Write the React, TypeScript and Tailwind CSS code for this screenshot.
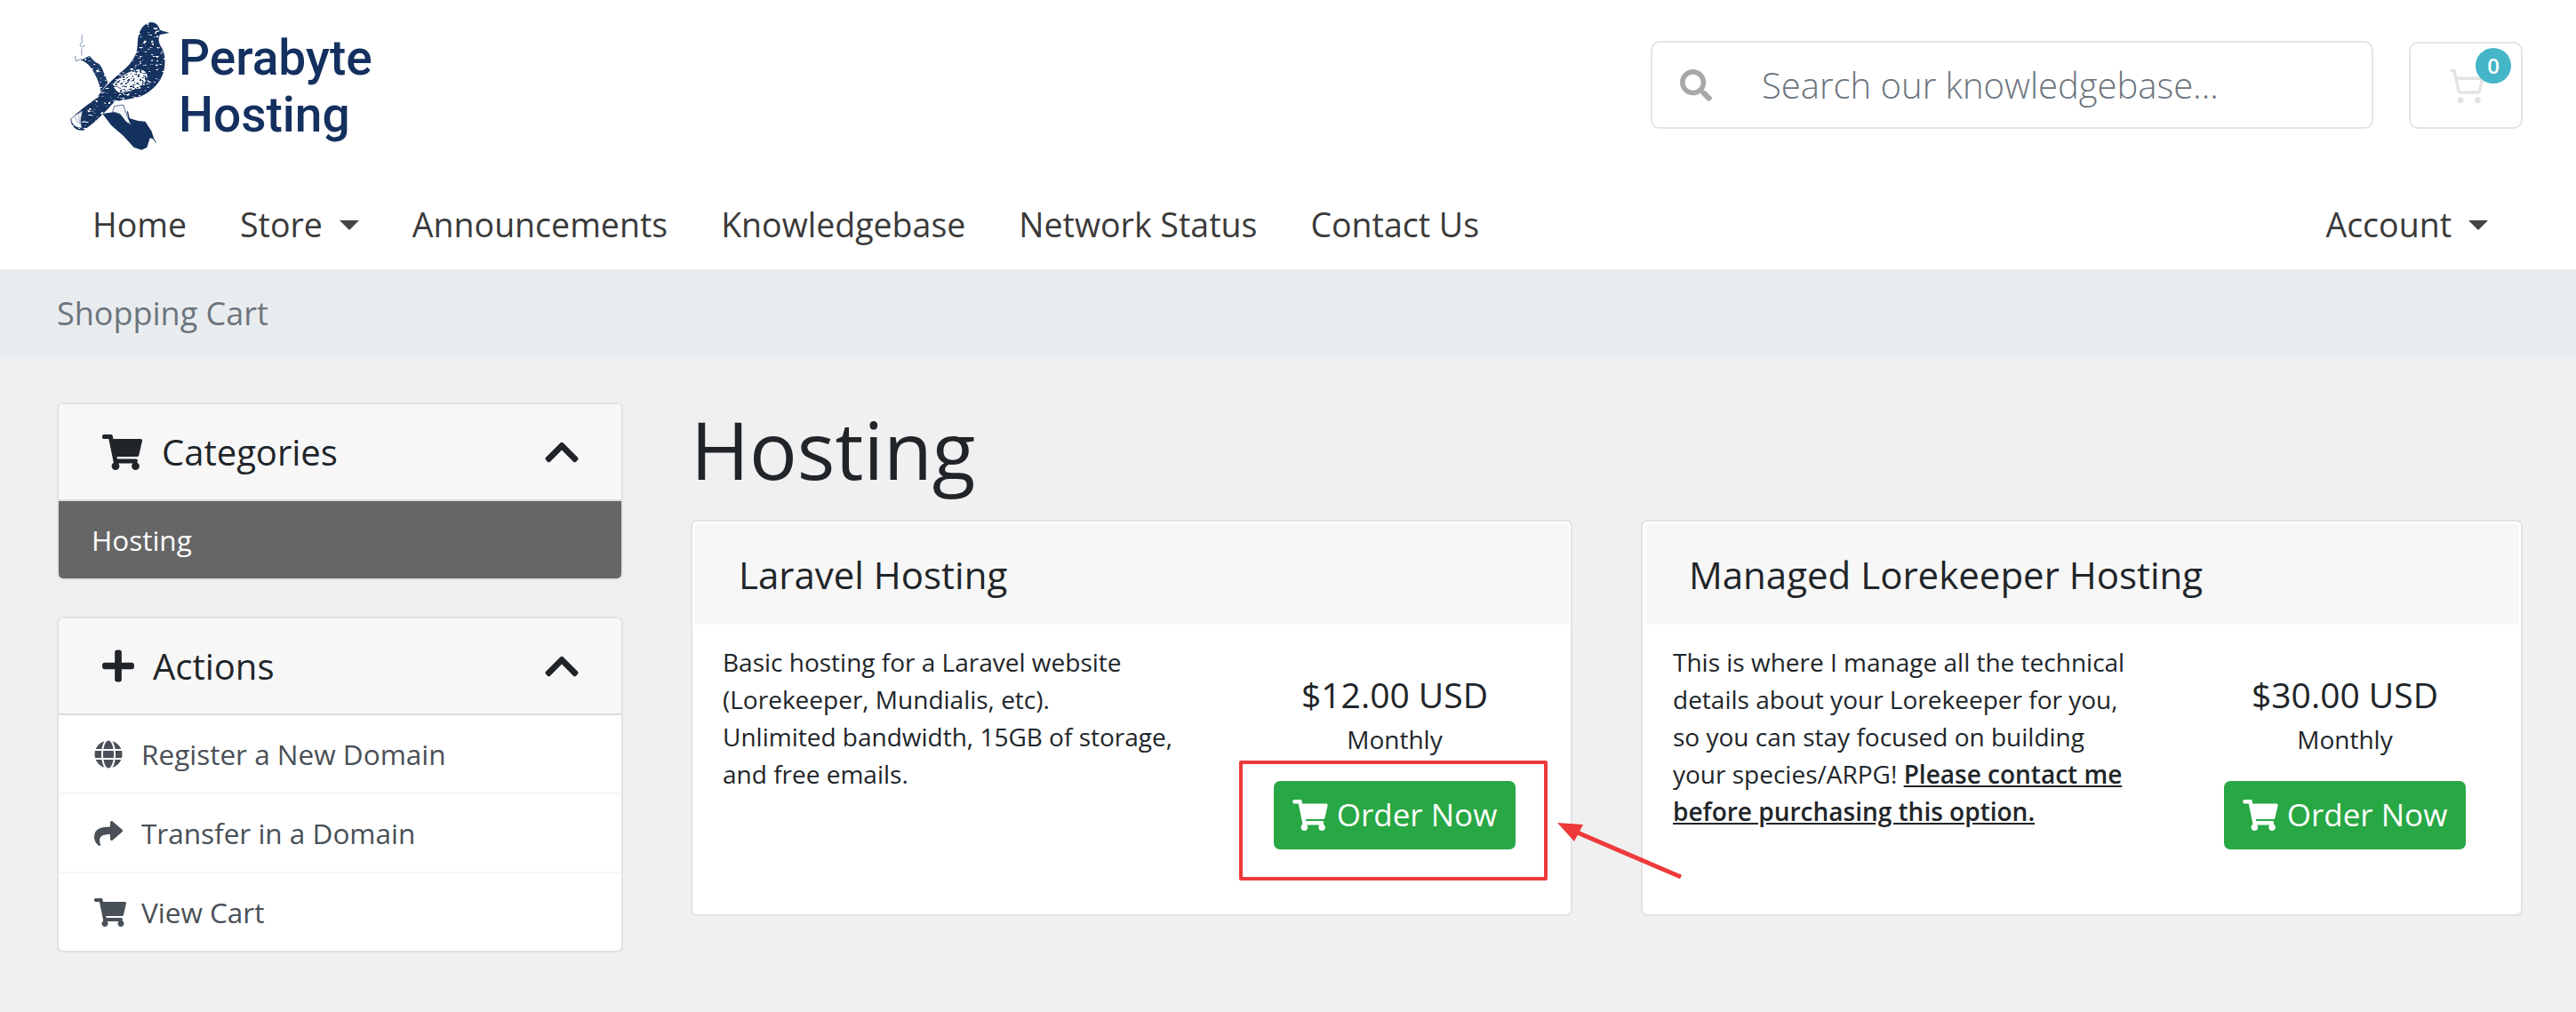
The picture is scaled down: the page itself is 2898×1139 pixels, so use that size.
import { FaChevronUp, FaGlobe, FaPlus, FaSearch, FaShare, FaShoppingCart } from "react-icons/fa";
import { ShoppingCart } from "lucide-react";

function Caret({ className = "" }: { className?: string }) {
  return <span className={`inline-block w-0 h-0 border-x-[11px] border-x-transparent border-t-[11px] border-t-[#444] ${className}`} />;
}

// hand drawn pigeon from the logo, the filter punches the engraved speckle out of the fill
function Pigeon() {
  return (
    <svg viewBox="0 0 480 510" className="w-[160px] h-[170px] shrink-0">
      <defs>
        <filter id="engrave" x="0" y="0" width="100%" height="100%">
          <feTurbulence type="fractalNoise" baseFrequency="0.07 0.14" numOctaves="2" seed="4" result="n" />
          <feColorMatrix in="n" type="matrix" values="0 0 0 0 0 0 0 0 0 0 0 0 0 0 0 0 0 0 -9 6.6" result="m" />
          <feComposite in="SourceGraphic" in2="m" operator="in" />
        </filter>
        <filter id="engraveLight" x="0" y="0" width="100%" height="100%">
          <feTurbulence type="fractalNoise" baseFrequency="0.12 0.2" numOctaves="2" seed="9" result="n" />
          <feColorMatrix in="n" type="matrix" values="0 0 0 0 0 0 0 0 0 0 0 0 0 0 0 0 0 0 -9 4.2" result="m" />
          <feComposite in="SourceGraphic" in2="m" operator="in" />
        </filter>
      </defs>
      <g fill="none" stroke="#7c8fae" strokeWidth="3" strokeLinecap="round">
        <path d="M98 88c-8 14 6 18-6 30-6 8 4 14 14 6" />
        <path d="M96 134c-4 8 2 14 0 22" />
        <path d="M74 160l2 16 18-6" />
      </g>
      {/* upper branch */}
      <path d="M92 172c12-4 20-8 28-14 12 8 16 20 30 26 14 6 18 30 26 44l8 22-24 30c-4-34-18-58-32-80-10-14-22-22-36-28z" fill="#1d3a68" filter="url(#engrave)" />
      {/* lower branch */}
      <path d="M166 354l40-6 52 22 28 8 24 2 22 34 8 26-14-4-10 32-18 8-26-8-36-40-40-34z" fill="#14305f" />
      <path d="M326 416l20 36" stroke="#14305f" strokeWidth="3" />
      {/* tail */}
      <path d="M58 372c26-26 62-52 106-84l42 26c-28 30-62 68-104 96-26 2-42-12-44-38z" fill="#14305f" filter="url(#engrave)" />
      <path d="M60 372c10-10 24-20 38-26-6 18-8 38-2 56-18 0-34-10-36-30z" fill="#fff" stroke="#6f84a6" strokeWidth="2" />
      <path d="M72 362l12 26M84 354l6 36" stroke="#6f84a6" strokeWidth="2" />
      {/* body and head */}
      <path d="M150 296c20-30 50-56 78-82 24-18 42-40 52-66 6-18 2-44 10-66 6-20 24-36 40-37 18 0 26 14 30 26l32 10-32 6c-6 10-6 22 2 38 16 22 18 56 10 88-12 40-42 66-76 82-28 8-54 12-78 16-24-2-48-2-68-15z" fill="#14305f" filter="url(#engrave)" />
      {/* wing highlight */}
      <path d="M202 254c18-24 50-42 86-50 24 2 34 18 26 38-20 26-60 38-88 42-12-4-22-16-24-30z" fill="#fff" />
      <path d="M202 254c18-24 50-42 86-50 24 2 34 18 26 38-20 26-60 38-88 42-12-4-22-16-24-30z" fill="#14305f" filter="url(#engraveLight)" />
      <circle cx="341" cy="66" r="3" fill="#fff" />
      {/* legs */}
      <path d="M206 328l30-4 14 40 16 30-20-12-22-28-24-6z" fill="#f3f5f9" stroke="#14305f" strokeWidth="2" />
      <path d="M250 346l8 34 16 26" stroke="#14305f" strokeWidth="4" fill="none" />
    </svg>
  );
}

function OrderButton() {
  return (
    <button className="mt-[26px] flex items-center justify-center w-[272px] h-[77px] rounded-[7px] bg-[#28a745] text-white text-[35px]">
      <FaShoppingCart className="w-[40px] h-[35px] mr-[10px]" />
      Order Now
    </button>
  );
}

function ProductCard({ title, price, children }: { title: string; price: string; children: React.ReactNode }) {
  return (
    <div className="w-[992px] h-[446px] bg-white border-2 border-[#e2e2e2] rounded-[7px] p-[2px]">
      <div className="h-[114px] bg-[#f7f7f7] rounded-t-[5px] flex items-center pl-[50px] text-[42px] text-[#212529]">{title}</div>
      <div className="flex">
        <div className="flex-1 pl-[32px] pt-[21px] text-[28px] leading-[42px] text-[#212529]">{children}</div>
        <div className="w-[318px] mr-[37px] pt-[54px] flex flex-col items-center text-[#212529]">
          <div className="text-[39px] leading-[50px]">{price}</div>
          <div className="mt-[4px] text-[28px] leading-[42px]">Monthly</div>
          <OrderButton />
        </div>
      </div>
    </div>
  );
}

function SideRow({ icon, label, last }: { icon: React.ReactNode; label: string; last?: boolean }) {
  return (
    <div className={`flex items-center pl-[40px] text-[31.5px] text-[#495057] ${last ? "h-[87px]" : "h-[89px] border-b-2 border-[#f5f5f5]"}`}>
      <span className="w-[53px] flex items-center">{icon}</span>
      {label}
    </div>
  );
}

function SideHeader({ icon, label }: { icon: React.ReactNode; label: string }) {
  return (
    <div className="h-[109px] bg-[#f7f7f7] border-b-2 border-[#dcdcdc] flex items-center pl-[49px] pr-[48px] text-[40px] text-[#212529]">
      {icon}
      <span className="flex-1">{label}</span>
      <FaChevronUp className="w-[38px] h-[44px]" />
    </div>
  );
}

export default function App() {
  return (
    <div className="relative min-h-screen bg-[#f0f0f0] font-['Open_Sans',sans-serif]">
      {/* Header */}
      <header className="bg-white h-[303px]">
        <div className="flex justify-between pl-[60px] pr-[60px] h-[204px]">
          <div className="flex pt-[10px]">
            <Pigeon />
            <div className="font-['Roboto',sans-serif] font-medium text-[#14305f] text-[55px] leading-[64px] pt-[23px] -ml-[19px]">
              Perabyte<br />Hosting
            </div>
          </div>
          <div className="flex items-start pt-[46px] gap-[40px]">
            <div className="w-[813px] h-[99px] border-2 border-[#e5e5e5] rounded-[10px] flex items-center">
              <FaSearch className="ml-[31px] w-[36px] h-[36px] text-[#a8a8a8]" />
              <span className="ml-[56px] text-[40px] font-light text-[#6c757d]">Search our knowledgebase...</span>
            </div>
            <div className="relative w-[128px] h-[98px] mt-px border-2 border-[#e5e5e5] rounded-[10px]">
              <ShoppingCart className="absolute left-[42px] top-[27px] w-[42px] h-[42px] text-[#e4e4e4]" strokeWidth={2} />
              <span className="absolute left-[73px] top-[5px] w-[40px] h-[40px] rounded-full bg-[#45b5c8] text-white text-[24px] font-semibold flex items-center justify-center">0</span>
            </div>
          </div>
        </div>
        <nav className="flex items-center justify-between pl-[104px] pr-[99px] text-[37.5px] text-[#3a3a3a] leading-[48px] mt-[25px]">
          <div className="flex items-center gap-[60px]">
            <span>Home</span>
            <span className="flex items-center">Store<Caret className="ml-[19px]" /></span>
            <span>Announcements</span>
            <span>Knowledgebase</span>
            <span>Network Status</span>
            <span>Contact Us</span>
          </div>
          <span className="flex items-center">Account<Caret className="ml-[19px]" /></span>
        </nav>
      </header>

      {/* Breadcrumb */}
      <div className="h-[99px] bg-[#e9ecef] flex items-center pl-[64px] text-[36px] text-[#6c757d]">Shopping Cart</div>

      <div className="flex items-start pl-[64px] pt-[51px] gap-[76px]">
        {/* Sidebar */}
        <aside className="w-[637px] flex flex-col gap-[41px]">
          <div className="bg-white border-2 border-[#e2e2e2] rounded-[7px] overflow-hidden">
            <SideHeader icon={<FaShoppingCart className="w-[45px] h-[40px] mr-[22px]" />} label="Categories" />
            <div className="h-[87px] bg-[#666] flex items-center pl-[37px] text-[31.5px] text-white">Hosting</div>
          </div>
          <div className="bg-white border-2 border-[#e2e2e2] rounded-[7px] overflow-hidden">
            <SideHeader icon={<FaPlus className="w-[36px] h-[41px] mr-[21px]" />} label="Actions" />
            <SideRow icon={<FaGlobe className="w-[32px] h-[32px]" />} label="Register a New Domain" />
            <SideRow icon={<FaShare className="w-[32px] h-[32px]" />} label="Transfer in a Domain" />
            <SideRow icon={<FaShoppingCart className="w-[36px] h-[32px]" />} label="View Cart" last />
          </div>
        </aside>

        {/* Products */}
        <main>
          <h1 className="text-[89.5px] leading-[106px] text-[#212529] -mt-[1px] mb-[27px]">Hosting</h1>
          <div className="flex gap-[77px]">
            <ProductCard title="Laravel Hosting" price="$12.00 USD">
              Basic hosting for a Laravel website<br />
              (Lorekeeper, Mundialis, etc).<br />
              Unlimited bandwidth, 15GB of storage,<br />
              and free emails.
            </ProductCard>
            <ProductCard title="Managed Lorekeeper Hosting" price="$30.00 USD">
              This is where I manage all the technical<br />
              details about your Lorekeeper for you,<br />
              so you can stay focused on building<br />
              your species/ARPG! <strong className="font-semibold underline">Please contact me<br />before purchasing this option.</strong>
            </ProductCard>
          </div>
        </main>
      </div>

      {/* Annotation drawn over the screenshot */}
      <div className="absolute left-[1394px] top-[856px] w-[347px] h-[135px] border-[4px] border-[#ee3a3a] rounded-[2px]" />
      <svg className="absolute left-0 top-0 pointer-events-none" width="2898" height="1139">
        <line x1="1891" y1="987" x2="1770" y2="935" stroke="#ee3a3a" strokeWidth="5" />
        <path d="M1752 926l29 2-10 19z" fill="#ee3a3a" />
      </svg>
    </div>
  );
}
